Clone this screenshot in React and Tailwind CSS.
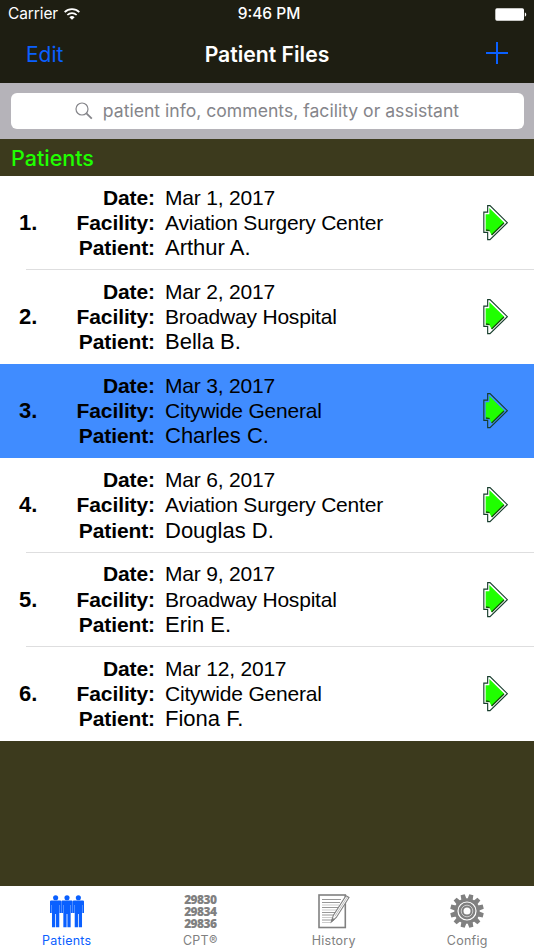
import { useState } from "react";

const patients = [
  { date: "Mar 1, 2017", facility: "Aviation Surgery Center", name: "Arthur A." },
  { date: "Mar 2, 2017", facility: "Broadway Hospital", name: "Bella B." },
  { date: "Mar 3, 2017", facility: "Citywide General", name: "Charles C." },
  { date: "Mar 6, 2017", facility: "Aviation Surgery Center", name: "Douglas D." },
  { date: "Mar 9, 2017", facility: "Broadway Hospital", name: "Erin E." },
  { date: "Mar 12, 2017", facility: "Citywide General", name: "Fiona F." },
];

const WifiIcon = () => (
  <svg viewBox="0 0 48 36" className="h-3 w-4 shrink-0" fill="none" stroke="white" strokeWidth="5.2">
    <path d="M2 12.5a31 31 0 0 1 44 0" />
    <path d="M10 21a19.5 19.5 0 0 1 28 0" />
    <path d="M16 27.5a11.5 11.5 0 0 1 16 0L24 35.5z" fill="white" stroke="none" />
  </svg>
);

const BatteryIcon = () => (
  <svg viewBox="0 0 32 13" className="h-[13px] w-8" fill="white">
    <rect x="0.3" y="0.3" width="28.7" height="12.4" rx="1.6" />
    <path d="M29.8 4.6c1.9.5 1.9 3.6 0 4.1z" />
  </svg>
);

const SearchIcon = () => (
  <svg viewBox="0 0 18 18" className="h-[18px] w-[18px] shrink-0" fill="none" stroke="#85858a">
    <circle cx="7" cy="7" r="6" strokeWidth="1.2" />
    <path d="M11.4 11.4l5.4 5.3" strokeWidth="1.8" />
  </svg>
);

const ArrowIcon = () => (
  <svg viewBox="66 42 81 111" className="h-[37px] w-[27px]">
    <path
      d="M71.5 66.5H83V47H90L142 98L90 149H83V127H71.5z"
      fill="none"
      stroke="#173d2c"
      strokeWidth="3.4"
    />
    <path d="M77 72.500H88V54L133 98L95 136L88 122H77z" fill="#20ff00" />
    <path d="M132 99L95 135M78 120L89 122" fill="none" stroke="#14500b" strokeWidth="4" />
  </svg>
);

const Person = ({ x }) => (
  <g transform={`translate(${x} 0)`}>
    <circle cx="5.500" cy="2.600" r="2.600" />
    <path d="M1 5.300h9q1.200 0 1.200 1.200V18H9.500V10h-.3V32.500H5.900V19h-.8V32.500H1.800V10h-.3V18H-.2V6.500q0-1.200 1.200-1.200z" />
  </g>
);

const PeopleIcon = () => (
  <svg viewBox="-0.2 0 34.4 33" className="h-[33px] w-[34px]" fill="#0a60ff">
    <Person x={0} />
    <Person x={11.5} />
    <Person x={23} />
  </svg>
);

const CodesIcon = () => (
  <span className="block h-9 pt-px font-['Open_Sans',sans-serif] text-[12px] leading-[12px] font-extrabold tracking-[-0.6px]">
    29830
    <br />
    29834
    <br />
    29836
  </span>
);

const NotepadIcon = () => (
  <svg viewBox="0 0 32 35" className="h-[35px] w-8">
    <rect x="1" y="1" width="26.300" height="32.500" fill="white" stroke="#808080" strokeWidth="1.600" />
    <path d="M4 5.500h19M4 8.500h18M4 13.500h16M4 18.500h13M4 21h12M4 26h10" stroke="#8b8b8b" strokeWidth="0.900" />
    <path d="M4 11h17M4 16h15M4 23.500h11M4 28.500h9" stroke="#c5c5c5" strokeWidth="0.900" />
    <path d="M13.400 27.800l1.900-6.400L28 1.800l3 1.700-12.700 20z" fill="white" stroke="#808080" strokeWidth="1.100" />
    <path d="M16.900 22.300L29.300 3" fill="none" stroke="#a0a0a0" strokeWidth="0.700" />
    <path d="M13.200 28l1.200-3.700 2 1.200z" fill="#777" stroke="#808080" strokeWidth="0.800" />
  </svg>
);

const GearIcon = () => (
  <svg viewBox="-17 -17 34 34" className="h-[34px] w-[34px]" fill="#808080">
    {[...Array(12)].map((_, i) => (
      <path key={i} d="M-2.600-12L-2.100-16.800H2.100L2.600-12z" transform={`rotate(${i * 30 + 15})`} />
    ))}
    <circle r="12.700" />
    <circle r="9" fill="none" stroke="white" strokeWidth="1.200" />
    <circle r="5.800" fill="none" stroke="#d5d5d5" strokeWidth="0.900" />
    <circle r="3.500" fill="white" />
  </svg>
);

const tabs = [
  { label: "Patients", icon: PeopleIcon },
  { label: "CPT®", icon: CodesIcon },
  { label: "History", icon: NotepadIcon },
  { label: "Config", icon: GearIcon },
];

const Field = ({ label, value, className = "text-[21px] tracking-[-0.2px]" }) => (
  <div className="flex">
    <dt className="w-[115px] shrink-0 text-right text-[21px] font-bold tracking-[-0.1px]">{label}:</dt>
    <dd className={`ml-2.5 ${className}`}>{value}</dd>
  </div>
);

const PatientRow = ({ number, patient, selected, divider, onClick }) => (
  <li
    onClick={onClick}
    className={`flex h-[94.150px] flex-col text-black ${selected ? "bg-[#408cff]" : "bg-white"}`}
  >
    <div className="flex h-[93.150px] shrink-0 items-center">
      <span className="w-10 pl-[19px] text-[22px] font-bold">{number}.</span>
      <dl className="w-[442px] leading-[25.100px]">
        <Field label="Date" value={patient.date} />
        <Field label="Facility" value={patient.facility} />
        <Field label="Patient" value={patient.name} className="text-[22px]" />
      </dl>
      <ArrowIcon />
    </div>
    {divider && <div className="ml-[26px] h-px bg-[#dededf]" />}
  </li>
);

export default function App() {
  const [selected, setSelected] = useState(2);
  const [activeTab, setActiveTab] = useState("Patients");

  return (
    <div className="flex h-[950px] w-[534px] flex-col overflow-hidden bg-[#3c3a1d] font-['Inter',sans-serif]">
      <header className="h-[83px] shrink-0 bg-[#1e1e12] text-white">
        <div className="grid h-7 grid-cols-3 items-center pr-[7px] pl-2 text-[15.500px]">
          <div className="flex items-center gap-1.5">
            <span className="tracking-[-0.1px]">Carrier</span>
            <WifiIcon />
          </div>
          <span className="pl-[3px] text-center font-medium">9:46 PM</span>
          <div className="flex justify-end">
            <BatteryIcon />
          </div>
        </div>
        <div className="grid h-[53px] grid-cols-3 items-center pr-[26px] pl-[26px]">
          <button className="text-left text-[21px] text-[#0a60ff]">Edit</button>
          <h1 className="text-center text-[21.200px] font-semibold whitespace-nowrap">Patient Files</h1>
          <button className="-mt-1 flex justify-end" aria-label="Add">
            <svg viewBox="0 0 22 22" className="h-[22px] w-[22px]" stroke="#0a60ff" strokeWidth="2">
              <path d="M0 11h22M11 0v22" />
            </svg>
          </button>
        </div>
      </header>

      <div className="h-14 shrink-0 bg-[#b5b3b9] px-[10.500px] pt-[10px]">
        <div className="flex h-9 items-center justify-center gap-2.5 rounded-md bg-white text-[#85858a]">
          <SearchIcon />
          <span className="text-[17.600px] whitespace-nowrap">patient info, comments, facility or assistant</span>
        </div>
      </div>

      <h2 className="flex h-[37px] shrink-0 items-center pt-px pl-[11px] text-[21.500px] font-medium text-[#20ff00]">
        Patients
      </h2>

      <ul className="shrink-0 font-['Liberation_Sans',Arial,sans-serif]">
        {patients.map((patient, i) => (
          <PatientRow
            key={patient.name}
            number={i + 1}
            patient={patient}
            selected={selected === i}
            divider={i !== selected && i + 1 !== selected && i < patients.length - 1}
            onClick={() => setSelected(i)}
          />
        ))}
      </ul>

      <nav className="mt-auto grid h-16 shrink-0 grid-cols-4 bg-white">
        {tabs.map(({ label, icon: Icon }) => (
          <button
            key={label}
            onClick={() => setActiveTab(label)}
            className={`flex flex-col items-center pt-[7px] ${activeTab === label ? "text-[#0a60ff]" : "text-[#808080]"}`}
          >
            <span className="flex h-9 items-center justify-center">
              <Icon />
            </span>
            <span className="mt-1 text-[12.500px] leading-4 tracking-[0.25px]">{label}</span>
          </button>
        ))}
      </nav>
    </div>
  );
}
